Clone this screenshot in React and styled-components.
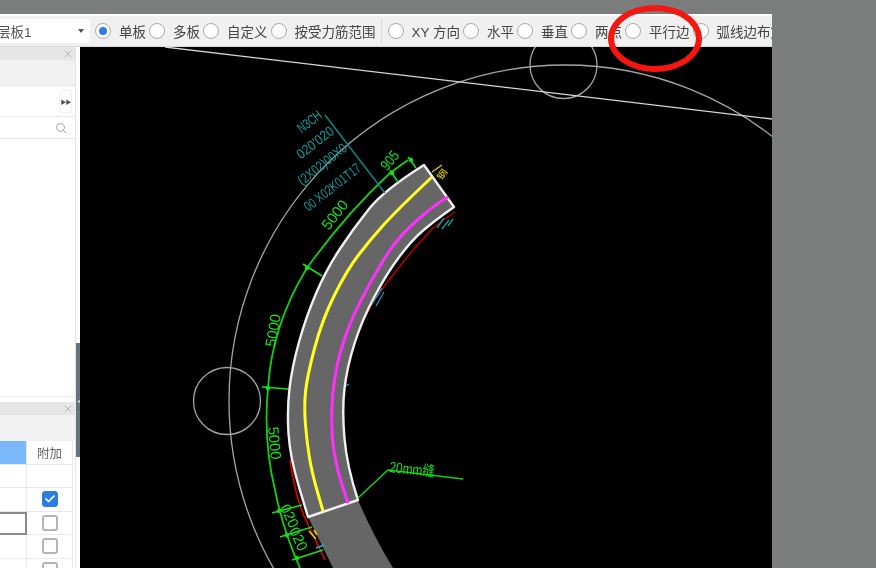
import { Fragment } from "react";
import styled, { createGlobalStyle } from "styled-components";
import { X, Search, Check } from "lucide-react";

const GlobalStyle = createGlobalStyle`
  html, body {
    margin: 0;
    height: 568px;
    overflow: hidden;
    background: #7b7d7c;
  }
`;

const Page = styled.div`
  position: relative;
  height: 568px;
  padding-top: 14px;
  box-sizing: border-box;
  overflow: hidden;
  font-family: "Liberation Sans", "Noto Sans CJK SC", sans-serif;
`;

const Window = styled.div`
  width: 772px;
  height: 554px;
  display: flex;
  flex-direction: column;
  background: #fff;
  filter: blur(0.45px);
`;

const Toolbar = styled.div`
  flex: 0 0 33px;
  box-sizing: border-box;
  display: flex;
  align-items: center;
  gap: 3px;
  padding-top: 2px;
  overflow: hidden;
  white-space: nowrap;
  background: linear-gradient(#fff 2px, #f0f0f0 2px);
  border-bottom: 1px solid #d8dbdd;
`;

const LayerSelect = styled.div`
  flex: 0 0 90px;
  height: 24px;
  margin-right: 2px;
  box-sizing: border-box;
  display: flex;
  align-items: center;
  justify-content: space-between;
  padding-right: 6px;
  background: #fff;
  border-radius: 0 4px 4px 0;
  font-size: 13.5px;
  color: #555;
  overflow: hidden;
`;

const LayerName = styled.span`
  margin-left: -3px;
`;

const Caret = styled.span`
  width: 0;
  height: 0;
  border-left: 3px solid transparent;
  border-right: 3px solid transparent;
  border-top: 4px solid #555;
`;

const Option = styled.label`
  flex: none;
  display: flex;
  align-items: center;
  gap: 8px;
  font-size: 13.5px;
  color: #444;
`;

const Radio = styled.span`
  flex: none;
  width: 16px;
  height: 16px;
  box-sizing: border-box;
  display: flex;
  align-items: center;
  justify-content: center;
  border: 1.5px solid #a9a9a9;
  border-radius: 50%;
  background: #fff;
  &::after {
    content: "";
    width: 8px;
    height: 8px;
    border-radius: 50%;
    background: ${(p) => (p.$on ? "#2a7ee8" : "transparent")};
  }
`;

const ToolSep = styled.span`
  flex: none;
  width: 1px;
  height: 24px;
  margin: 0 3px 0 2px;
  background: #d8d8d8;
`;

const Body = styled.div`
  flex: 1;
  min-height: 0;
  display: flex;
`;

const Side = styled.div`
  flex: 0 0 76px;
  box-sizing: border-box;
  display: flex;
  flex-direction: column;
  background: #fff;
  border-right: 1px solid #e4e4e4;
  overflow: hidden;
`;

const PanelHead = styled.div`
  flex: 0 0 13px;
  display: flex;
  align-items: center;
  justify-content: flex-end;
  padding-right: 1px;
  background: #e6e6e6;
  color: #a8a8a8;
`;

const PanelBand = styled.div`
  flex: 0 0 ${(p) => p.$h}px;
  background: #f1f1f1;
`;

const ExpandRow = styled.div`
  flex: 0 0 32px;
  box-sizing: border-box;
  display: flex;
  align-items: center;
  justify-content: flex-end;
  padding-right: 3px;
  border-top: 1px solid #e6e6e6;
  border-bottom: 1px solid #e6e6e6;
`;

const ExpandButton = styled.span`
  width: 11px;
  height: 21px;
  display: flex;
  align-items: center;
  justify-content: center;
  border: 1px solid #f0f0f0;
  border-radius: 3px;
  font-size: 6px;
  letter-spacing: -1px;
  color: #555;
`;

const SearchRow = styled.div`
  flex: 0 0 21px;
  display: flex;
  align-items: center;
  justify-content: flex-end;
  padding-right: 8px;
  border-bottom: 1px solid #e6e6e6;
  color: #a5a5a5;
`;

const TreeArea = styled.div`
  flex: 0 0 257px;
  border-bottom: 1px solid #e6e6e6;
  margin-bottom: 5px;
`;

const Table = styled.div`
  display: grid;
  grid-template-columns: 27px 46px;
  grid-auto-rows: 23.5px;
`;

const Cell = styled.div`
  box-sizing: border-box;
  display: flex;
  align-items: center;
  justify-content: center;
  border-right: 1px solid #e8e8e8;
  border-bottom: 1px solid #e8e8e8;
  font-size: 12.5px;
  color: #666;
  background: ${(p) => (p.$head ? "#7ab8fb" : "#fff")};
  ${(p) => p.$focus && "border: 2px solid #8a8a8a; margin-left: -3px;"}
`;

const CheckBox = styled.span`
  width: 16px;
  height: 16px;
  box-sizing: border-box;
  display: flex;
  align-items: center;
  justify-content: center;
  border-radius: 3px;
  border: ${(p) => (p.$on ? "1px solid #2b7de0" : "2px solid #b4b4b4")};
  background: ${(p) => (p.$on ? "#2b7de0" : "#fff")};
  color: #fff;
`;

const Splitter = styled.div`
  flex: 0 0 4px;
  display: flex;
  flex-direction: column;
  background: #fff;
`;

const SplitterGrip = styled.div`
  height: 114px;
  margin-top: 296px;
  display: flex;
  align-items: center;
  justify-content: center;
  background: #66727e;
  color: #c6ccd2;
  font-size: 6px;
`;

const Canvas = styled.svg`
  flex: 1;
  min-width: 0;
  height: 100%;
  display: block;
  background: #000;
`;

const Dim = styled.text`
  font-size: ${(p) => p.$size || 15}px;
  fill: ${(p) => p.$color || "#18e018"};
`;

const Marker = styled.div`
  position: absolute;
  left: 608px;
  top: 5px;
  width: 94px;
  height: 67px;
  box-sizing: border-box;
  border: 6px solid #f5170f;
  border-radius: 50%;
  filter: blur(0.4px);
`;

const options = [
  { label: "单板", on: true },
  { label: "多板" },
  { label: "自定义" },
  { label: "按受力筋范围", sep: true },
  { label: "XY 方向" },
  { label: "水平" },
  { label: "垂直" },
  { label: "两点" },
  { label: "平行边" },
  { label: "弧线边布筋" },
];

const rows = [
  { head: true },
  {},
  { box: "on" },
  { box: "off", focus: true },
  { box: "off" },
  { box: "off" },
];

const outerEdge = [[424, 165], [384, 190], [353, 229], [326, 270], [306, 317], [292, 367], [287, 410], [290, 457], [308, 517]];
const innerEdge = [[358, 500], [347, 467], [342, 410], [347, 367], [362, 320], [387, 273], [412, 240], [433, 222], [454, 207]];
const yellowLine = [[432, 177], [397, 210], [370, 240], [347, 270], [322, 320], [307, 377], [304, 407], [307, 443], [312, 473], [323, 511]];
const magentaLine = [[448, 197], [437, 203], [400, 235], [378, 268], [347, 327], [333, 380], [331, 433], [337, 470], [348, 503]];

// quadratic through midpoints, keeps the end points
const smooth = (pts, start = "M") => {
  let d = `${start}${pts[0][0]} ${pts[0][1]}`;
  for (let i = 1; i < pts.length - 1; i++) {
    const mx = (pts[i][0] + pts[i + 1][0]) / 2;
    const my = (pts[i][1] + pts[i + 1][1]) / 2;
    d += ` Q${pts[i][0]} ${pts[i][1]} ${mx} ${my}`;
  }
  const last = pts[pts.length - 1];
  return `${d} L${last[0]} ${last[1]}`;
};

const label = (x, y, r, len, text, color, size) => (
  <Dim
    x="0"
    y="0"
    $color={color}
    $size={size}
    textAnchor="end"
    textLength={len}
    lengthAdjust="spacingAndGlyphs"
    transform={`translate(${x} ${y}) rotate(${r})`}
  >
    {text}
  </Dim>
);

const ticks = [
  [408, 157, 416, 168],
  [390, 170, 398, 182],
  [303, 264, 322, 276],
  [262, 387, 288, 389],
  [272, 513, 302, 505],
  [280, 537, 312, 527],
  [292, 560, 323, 550],
];

const dots = [[411, 160], [392, 173], [307, 268], [268, 388], [279, 511], [287, 535], [297, 558]];

const Drawing = () => (
  <Canvas viewBox="80 47 692 521" preserveAspectRatio="xMinYMin slice">
    <circle cx="565" cy="401" r="336" fill="none" stroke="#a6a6a6" strokeWidth="1.3" />
    <circle cx="227" cy="401" r="33.5" fill="none" stroke="#a6a6a6" strokeWidth="1.3" />
    <circle cx="563.5" cy="65" r="33.5" fill="none" stroke="#a6a6a6" strokeWidth="1.3" />
    <line x1="165" y1="47" x2="772" y2="119" stroke="#d8d8d8" strokeWidth="1.3" />

    <path d="M308 517 L358 500 Q373 535 393 568 L333 568 Z" fill="#666" />
    <path d="M290 460 Q295 495 304 516 L325 560" fill="none" stroke="#e80000" strokeWidth="1.6" />
    <path d="M455 212 Q438 224 433 228 Q412 250 397 270 Q372 300 360 327 Q350 355 345 387" fill="none" stroke="#b80000" strokeWidth="1.5" />
    <path d={`${smooth(outerEdge)} ${smooth(innerEdge, "L")} Z`} fill="#666" stroke="#f0f0f0" strokeWidth="2.4" strokeLinejoin="round" />
    <path d={smooth(yellowLine)} fill="none" stroke="#ffff20" strokeWidth="3" />
    <path d={smooth(magentaLine)} fill="none" stroke="#ff30ff" strokeWidth="3" />

    <path d="M408 160 L390 173 Q345 215 307 268 Q272 325 268 388 Q263 440 275 490 Q283 530 300 568" fill="none" stroke="#14d014" strokeWidth="1.8" />
    {ticks.map(([x1, y1, x2, y2]) => (
      <line key={x1} x1={x1} y1={y1} x2={x2} y2={y2} stroke="#18e018" strokeWidth="1.6" />
    ))}
    {dots.map(([cx, cy]) => (
      <circle key={cx} cx={cx} cy={cy} r="2.2" fill="#18e018" />
    ))}
    <path d="M358 498 L388 470 L463 479" fill="none" stroke="#14d014" strokeWidth="1.5" />

    {label(400, 156, -50, 20, "905")}
    {label(349, 205, -52, 33, "5000")}
    {label(281, 315, -80, 33, "5000")}
    {label(271, 460, 85, 33, "5000")}
    {label(290, 529, 65, 24, "020")}
    {label(299, 552, 65, 24, "020")}
    <Dim x="389" y="472" textLength="45" lengthAdjust="spacingAndGlyphs" transform="rotate(6 389 472)">
      20mm缝
    </Dim>

    <line x1="325" y1="115" x2="385" y2="193" stroke="#0a8a8a" strokeWidth="1.4" />
    {label(323, 117, -38, 27, "N3CH", "#0f9c9c", 14)}
    {label(335, 133, -38, 43, "020'020", "#0f9c9c", 14)}
    {label(348, 150, -38, 58, "(2X02)00X0", "#0f9c9c", 14)}
    {label(362, 170, -38, 68, "00 X02K01T17", "#0f9c9c", 14)}

    <line x1="432" y1="172" x2="442" y2="165" stroke="#e6d800" strokeWidth="1.2" />
    {label(448, 172, -52, 11, "钢", "#e6d800", 9)}
    <path d="M437 228 L444 218 M442 229 L449 220 M448 226 L453 219" stroke="#129a9a" strokeWidth="1.4" />
    <path d="M372 304 L382 288 M376 306 L384 292 M346 386 L349 384" stroke="#14a8c8" strokeWidth="1.2" />
    <path d="M309 531 L316 539 M314 530 L317 535" stroke="#d8c800" strokeWidth="1.8" />
    <path d="M316 548 L324 545" stroke="#18b8e0" strokeWidth="1.8" />
  </Canvas>
);

const App = () => (
  <Page>
    <GlobalStyle />
    <Window>
      <Toolbar>
        <LayerSelect>
          <LayerName>层板1</LayerName>
          <Caret />
        </LayerSelect>
        {options.map((o) => (
          <Fragment key={o.label}>
            <Option>
              <Radio $on={o.on} />
              {o.label}
            </Option>
            {o.sep && <ToolSep />}
          </Fragment>
        ))}
      </Toolbar>
      <Body>
        <Side>
          <PanelHead>
            <X size={12} strokeWidth={1.5} />
          </PanelHead>
          <PanelBand $h={25} />
          <ExpandRow>
            <ExpandButton>▶▶</ExpandButton>
          </ExpandRow>
          <SearchRow>
            <Search size={12} strokeWidth={2} />
          </SearchRow>
          <TreeArea />
          <PanelHead>
            <X size={12} strokeWidth={1.5} />
          </PanelHead>
          <PanelBand $h={26} />
          <Table>
            {rows.map((r, i) => (
              <Fragment key={i}>
                <Cell $head={r.head} $focus={r.focus} />
                <Cell>
                  {r.head && "附加"}
                  {r.box && (
                    <CheckBox $on={r.box === "on"}>
                      {r.box === "on" && <Check size={12} strokeWidth={3.5} />}
                    </CheckBox>
                  )}
                </Cell>
              </Fragment>
            ))}
          </Table>
        </Side>
        <Splitter>
          <SplitterGrip>◂</SplitterGrip>
        </Splitter>
        <Drawing />
      </Body>
    </Window>
    <Marker />
  </Page>
);

export default App;
